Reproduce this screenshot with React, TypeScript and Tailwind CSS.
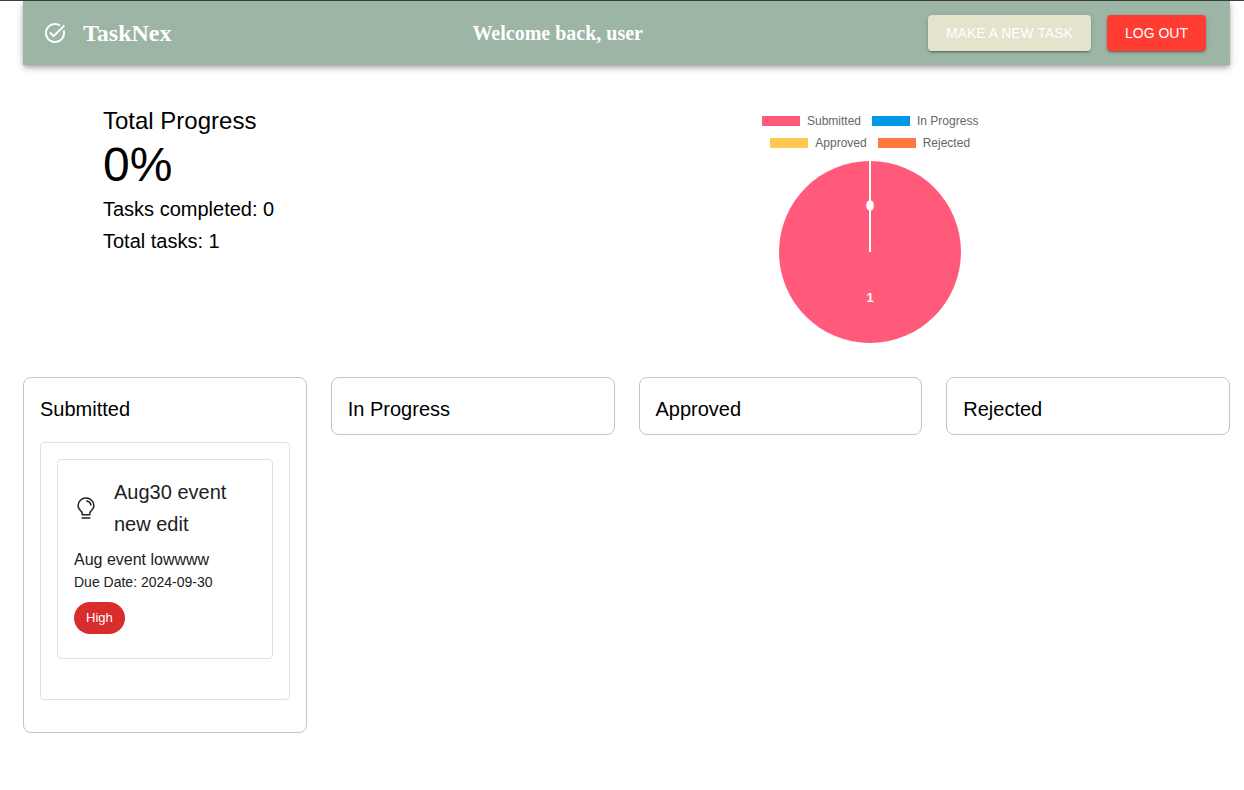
import { MdTaskAlt } from "react-icons/md";

type Priority = "High" | "Medium" | "Low";

interface Task {
  title: string;
  description: string;
  dueDate: string;
  priority: Priority;
}

interface Column {
  name: string;
  swatch: string;
  tasks: Task[];
}

const columns: Column[] = [
  {
    name: "Submitted",
    swatch: "bg-[#ff5a7a]",
    tasks: [
      {
        title: "Aug30 event new edit",
        description: "Aug event lowwww",
        dueDate: "2024-09-30",
        priority: "High",
      },
    ],
  },
  { name: "In Progress", swatch: "bg-[#0099e6]", tasks: [] },
  { name: "Approved", swatch: "bg-[#ffc853]", tasks: [] },
  { name: "Rejected", swatch: "bg-[#ff7840]", tasks: [] },
];

const priorityColors: Record<Priority, string> = {
  High: "bg-[#d92d2d]",
  Medium: "bg-[#ed6c02]",
  Low: "bg-[#2e7d32]",
};

function Header() {
  return (
    <header className="flex h-16 items-center justify-between bg-[#9cb5a5] pr-6 pl-5 text-white shadow-[0_2px_4px_-1px_rgba(0,0,0,0.2),0_4px_5px_0_rgba(0,0,0,0.14),0_1px_10px_0_rgba(0,0,0,0.12)]">
      <div className="flex items-center gap-4 pr-4 font-['Liberation_Serif',serif]">
        <MdTaskAlt className="size-6" aria-hidden="true" />
        <h1 className="text-2xl font-bold">TaskNex</h1>
      </div>
      <p className="font-['Liberation_Serif',serif] text-xl font-bold">
        Welcome back, user
      </p>
      <div className="flex gap-4">
        <HeaderButton label="Make a new task" tone="bg-[#e4e4cd]" />
        <HeaderButton label="Log out" tone="bg-[#ff3c32]" />
      </div>
    </header>
  );
}

function HeaderButton({ label, tone }: { label: string; tone: string }) {
  return (
    <button
      type="button"
      className={`h-9 rounded px-[18px] text-sm text-white uppercase shadow-[0_3px_1px_-2px_rgba(0,0,0,0.2),0_2px_2px_0_rgba(0,0,0,0.14),0_1px_5px_0_rgba(0,0,0,0.12)] ${tone}`}
    >
      {label}
    </button>
  );
}

function BulbIcon() {
  return (
    <svg
      viewBox="0 0 24 24"
      className="size-6 shrink-0"
      fill="none"
      stroke="currentColor"
      strokeWidth="1.5"
      strokeLinecap="round"
      strokeLinejoin="round"
      aria-hidden="true"
    >
      <path d="M8.2 18.7V17.6C8.2 16.4 7.5 15.5 6.5 14.5C5 13 4.1 11.4 4.1 9.6C4.1 5.3 7.6 2 12 2S19.9 5.3 19.9 9.6C19.9 11.4 19 13 17.5 14.5C16.5 15.5 15.8 16.4 15.8 17.6V18.7Z" />
      <path d="M8.2 22H15.8" />
      <path d="M12.8 5C15 5.3 16.5 6.8 16.9 8.9" />
    </svg>
  );
}

function StatusChart() {
  return (
    <figure className="flex flex-col items-center pt-[5px]">
      <figcaption className="flex w-60 flex-wrap justify-center gap-x-[11px] text-xs leading-[22px] text-[#666]">
        {columns.map((column) => (
          <span key={column.name} className="flex items-center gap-[7px]">
            <span className={`h-[10px] w-[38px] ${column.swatch}`} />
            {column.name}
          </span>
        ))}
      </figcaption>
      <svg
        viewBox="0 0 182 182"
        className="mt-[7px] size-[182px]"
        role="img"
        aria-label="Tasks by status"
      >
        <circle cx="91" cy="91" r="91" fill="#ff5a7a" />
        <path d="M91 0V91" stroke="#fff" strokeWidth="2" />
        <g
          fill="#fff"
          fontSize="13"
          fontWeight="700"
          textAnchor="middle"
          fontFamily="Liberation Sans, sans-serif"
        >
          <text x="91" y="49" stroke="#fff" strokeWidth="1">
            0
          </text>
          <text x="91" y="141">1</text>
        </g>
      </svg>
    </figure>
  );
}

function TaskCard({ task }: { task: Task }) {
  return (
    <div className="rounded border border-[#e0e0e0] px-4 pt-4 pb-10">
      <article className="rounded border border-[#e0e0e0] px-4 pt-4 pb-6 text-[#212121]">
        <div className="flex items-center gap-4">
          <BulbIcon />
          <h3 className="text-xl leading-8">{task.title}</h3>
        </div>
        <p className="mt-2 text-base">{task.description}</p>
        <p className="text-sm">Due Date: {task.dueDate}</p>
        <span
          className={`mt-[10px] flex h-8 w-fit items-center rounded-full px-3 text-[13px] text-white ${priorityColors[task.priority]}`}
        >
          {task.priority}
        </span>
      </article>
    </div>
  );
}

function BoardColumn({ column }: { column: Column }) {
  return (
    <section className="rounded-lg border border-[#c4c4c4] px-4 pt-[15px] pb-[9px]">
      <h2 className="text-xl leading-8">{column.name}</h2>
      {column.tasks.length > 0 && (
        <div className="mt-[17px] mb-[23px] flex flex-col gap-4">
          {column.tasks.map((task) => (
            <TaskCard key={task.title} task={task} />
          ))}
        </div>
      )}
    </section>
  );
}

export default function App() {
  const total = columns.reduce((sum, column) => sum + column.tasks.length, 0);

  return (
    <div className="min-h-screen border-t border-[#3f3f3f] bg-white pr-[14px] pl-[23px] font-['Liberation_Sans',Arial,sans-serif] text-black">
      <Header />
      <main>
        <section className="grid grid-cols-[27fr_31fr] px-20 pt-10">
          <div>
            <h2 className="text-2xl leading-8">Total Progress</h2>
            <p className="text-5xl leading-[56px]">0%</p>
            <p className="text-xl leading-8">Tasks completed: 0</p>
            <p className="text-xl leading-8">Total tasks: {total}</p>
          </div>
          <StatusChart />
        </section>
        <div className="mt-[34px] grid grid-cols-4 items-start gap-6">
          {columns.map((column) => (
            <BoardColumn key={column.name} column={column} />
          ))}
        </div>
      </main>
    </div>
  );
}
